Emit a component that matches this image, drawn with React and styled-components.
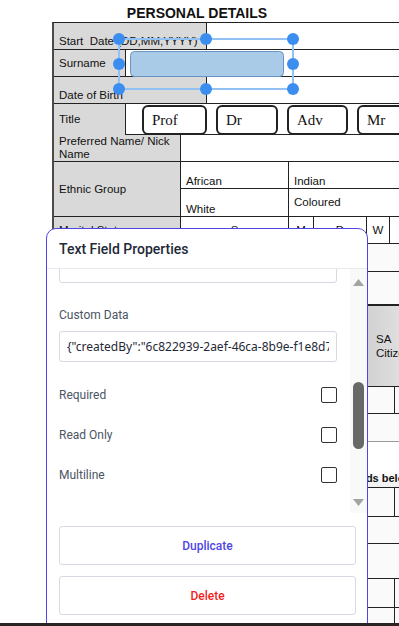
import React from "react";
import styled, { createGlobalStyle } from "styled-components";

const GlobalStyle = createGlobalStyle`
  html, body {
    margin: 0;
    padding: 0;
    background: #fff;
    overflow: hidden;
  }
  body {
    font-family: "Liberation Sans", Arial, sans-serif;
  }
`;

const Page = styled.div`
  position: relative;
  width: 399px;
  height: 626px;
  overflow: hidden;
`;

const Heading = styled.h1`
  margin: 0;
  padding-top: 5px;
  width: 394px;
  text-align: center;
  font: 700 14px/16px "Liberation Sans", Arial, sans-serif;
  color: #111;
`;

const Sheet = styled.div`
  margin: 1px 0 0 52px;
  width: 380px;
  border-top: 1px solid #222;
  border-left: 2px solid #4a4a4a;
  font-size: 11.5px;
  line-height: 13px;
  color: #111;
`;

const Row = styled.div`
  display: grid;
  grid-template-columns: ${(p) => p.$cols};
  grid-template-rows: ${(p) => p.$rows || "1fr"};
  height: ${(p) => p.$h}px;
  box-sizing: border-box;
  border-bottom: ${(p) =>
    p.$heavy ? "2px solid #222" : p.$light ? "1px solid #9a9a9a" : "1px solid #222"};
`;

const Label = styled.div`
  grid-row: ${(p) => p.$span || "auto"};
  background: #d9d9d9;
  padding: 0 5px;
  display: flex;
  align-items: ${(p) => (p.$bottom ? "flex-end" : "center")};
  padding-bottom: ${(p) => (p.$bottom ? "1px" : "0")};
`;

const Cell = styled.div`
  box-sizing: border-box;
  border-left: ${(p) => (p.$noLeft ? "none" : "1px solid #222")};
  border-bottom: ${(p) => (p.$under ? "1px solid #222" : "none")};
  display: flex;
  align-items: ${(p) => p.$v || "center"};
  justify-content: ${(p) => (p.$center ? "center" : "flex-start")};
  padding: 0 ${(p) => p.$pad || 5}px;
  line-height: ${(p) => (p.$wrap ? "14px" : "13px")};
  background: ${(p) =>
    p.$grey ? "linear-gradient(90deg, #d2d2d2, #e4e4e4)" : p.$soft ? "#fafafa" : "transparent"};
`;

const SectionNote = styled.div`
  display: flex;
  align-items: flex-end;
  padding: 0 0 2px ${(p) => p.$indent}px;
  font-weight: 700;
  font-size: 11px;
  background: linear-gradient(180deg, #fff 60%, #f1f1f1);
`;

const TitleOptions = styled.div`
  border-left: 1px solid #222;
  display: flex;
  gap: 9px;
  padding: 1px 0 0 16px;
`;

const TitleBox = styled.div`
  flex: none;
  width: ${(p) => p.$w}px;
  height: 30px;
  box-sizing: border-box;
  border: 2px solid #222;
  border-radius: 6px;
  display: flex;
  align-items: center;
  padding-left: 8px;
  font: 15px/17px "Liberation Serif", "Times New Roman", serif;
  color: #111;
`;

const Selection = styled.svg`
  position: absolute;
  left: 0;
  top: 0;
  pointer-events: none;
`;

const Panel = styled.aside`
  position: absolute;
  left: 46px;
  top: 228px;
  width: 322px;
  height: 420px;
  box-sizing: border-box;
  border: 1px solid #4f46e5;
  border-radius: 10px 10px 0 0;
  background: #fff;
  display: flex;
  flex-direction: column;
  font-family: Roboto, "Noto Sans", sans-serif;
`;

const PanelHeader = styled.header`
  height: 40px;
  box-sizing: border-box;
  flex: none;
  border-bottom: 1px solid #e8e8ef;
  padding: 1px 12px 0;
  display: flex;
  align-items: center;
  font-size: 14px;
  font-weight: 500;
  color: #1f2937;
`;

const PanelBody = styled.div`
  display: flex;
  height: 244px;
  flex: none;
`;

const Viewport = styled.div`
  flex: 1;
  overflow: hidden;
  padding: 0 13px 0 12px;
`;

const ScrollContent = styled.div`
  margin-top: -17px;
`;

const FieldLabel = styled.div`
  margin-top: 24px;
  font-size: 12px;
  line-height: 16px;
  color: #4b5563;
`;

const TextInput = styled.input`
  display: block;
  width: 100%;
  height: 31px;
  box-sizing: border-box;
  margin: ${(p) => p.$mt || 0}px 0 0;
  padding: 0 7px;
  border: 1px solid #d8d8e2;
  border-radius: 3px;
  font: 12px "Noto Sans", Roboto, sans-serif;
  color: #1f2937;
  background: #fff;
  outline: none;
`;

const ToggleList = styled.div`
  margin-top: 13px;
`;

const ToggleRow = styled.label`
  height: 40px;
  display: flex;
  align-items: center;
  justify-content: space-between;
  font-size: 12px;
  color: #4b5563;
`;

const Check = styled.input`
  appearance: none;
  margin: 0;
  width: 16px;
  height: 16px;
  box-sizing: border-box;
  border: 1.5px solid #333;
  border-radius: 2px;
  background: #fff;
`;

const Scrollbar = styled.div`
  width: 17px;
  flex: none;
  background: #f9f9f9;
  display: flex;
  flex-direction: column;
  align-items: center;
  padding: 6px 0 4px;
  box-sizing: border-box;
`;

const Arrow = styled.div`
  height: 14px;
  display: flex;
  align-items: center;
  justify-content: center;
`;

const Track = styled.div`
  flex: 1;
  width: 100%;
  display: flex;
  justify-content: center;
`;

const Thumb = styled.div`
  width: 11px;
  height: 67px;
  border-radius: 6px;
  background: #686868;
`;

const Footer = styled.div`
  display: flex;
  flex-direction: column;
  gap: 11px;
  padding: 13px 11px 0 12px;
`;

const ActionButton = styled.button`
  height: 39px;
  border: 1px solid #d9d9e3;
  border-radius: 3px;
  background: #fff;
  font: 500 12px Roboto, "Noto Sans", sans-serif;
  color: ${(p) => p.$tone};
`;

const BottomBar = styled.div`
  position: absolute;
  left: 0;
  right: 0;
  bottom: 0;
  height: 3px;
  background: #2b2422;
`;

const handles = [
  [119, 39], [206, 39], [293, 39],
  [119, 64], [293, 64],
  [119, 89], [206, 89], [293, 89],
];

export default function App() {
  return (
    <Page>
      <GlobalStyle />
      <Heading>PERSONAL DETAILS</Heading>
      <Sheet>
        <Row $h={27} $cols="152px 1fr">
          <Label $bottom>Start&nbsp; Date (DD,MM,YYYY)</Label>
          <Cell />
        </Row>
        <Row $h={27} $cols="71px 1fr">
          <Label>Surname</Label>
          <Cell />
        </Row>
        <Row $h={27} $cols="152px 1fr">
          <Label $bottom>Date of Birth</Label>
          <Cell />
        </Row>
        <Row $h={31} $cols="71px 1fr">
          <Label>Title</Label>
          <TitleOptions>
            <TitleBox $w={65}>Prof</TitleBox>
            <TitleBox $w={62}>Dr</TitleBox>
            <TitleBox $w={61}>Adv</TitleBox>
            <TitleBox $w={62}>Mr</TitleBox>
          </TitleOptions>
        </Row>
        <Row $h={27} $cols="126px 1fr">
          <Label>Preferred Name/ Nick Name</Label>
          <Cell />
        </Row>
        <Row $h={55} $cols="126px 108px 1fr" $rows="27px 1fr">
          <Label $span="span 2">Ethnic Group</Label>
          <Cell $under $v="flex-end">African</Cell>
          <Cell $under $v="flex-end">Indian</Cell>
          <Cell $v="flex-end">White</Cell>
          <Cell>Coloured</Cell>
        </Row>
        <Row $h={27} $cols="126px 108px 25px 53px 23px 1fr">
          <Label>Marital Status</Label>
          <Cell $center>S</Cell>
          <Cell $center>M</Cell>
          <Cell $center>D</Cell>
          <Cell $center>W</Cell>
          <Cell />
        </Row>
        <Row $h={28} $cols="126px 1fr">
          <Label>Race</Label>
          <Cell $soft />
        </Row>
        <Row $h={34} $heavy $cols="126px 1fr">
          <Label>Nationality</Label>
          <Cell $soft />
        </Row>
        <Row $h={81} $cols="313px 48px 1fr">
          <Cell $noLeft />
          <Cell $grey $wrap $pad={8}>SA Citizen</Cell>
          <Cell $grey />
        </Row>
        <Row $h={27} $cols="340px 1fr">
          <Cell $noLeft $soft />
          <Cell $soft />
        </Row>
        <Row $h={28} $light $cols="1fr">
          <Cell $noLeft $soft />
        </Row>
        <Row $h={46} $cols="1fr">
          <SectionNote $indent={296}>fields below</SectionNote>
        </Row>
        <Row $h={29} $cols="340px 1fr">
          <Cell $noLeft $soft />
          <Cell $soft />
        </Row>
        <Row $h={27} $cols="1fr">
          <Cell $noLeft $soft />
        </Row>
        <Row $h={35} $cols="1fr">
          <Cell $noLeft $soft />
        </Row>
        <Row $h={29} $cols="340px 1fr">
          <Cell $noLeft $soft />
          <Cell $soft />
        </Row>
        <Row $h={32} $cols="340px 1fr">
          <Cell $noLeft $soft />
          <Cell $soft />
        </Row>
      </Sheet>

      <Selection width="399" height="100" viewBox="0 0 399 100">
        <rect x="130.5" y="51.5" width="153" height="25" rx="4" fill="#a9cbe8" stroke="#6a95c2" />
        <rect x="119" y="39" width="174" height="50" fill="none" stroke="#93c1f3" strokeWidth="2" />
        {handles.map(([cx, cy]) => (
          <circle key={`${cx}-${cy}`} cx={cx} cy={cy} r="6" fill="#3b8ef0" />
        ))}
      </Selection>

      <Panel>
        <PanelHeader>Text Field Properties</PanelHeader>
        <PanelBody>
          <Viewport>
            <ScrollContent>
              <TextInput readOnly value="" />
              <FieldLabel>Custom Data</FieldLabel>
              <TextInput
                $mt={8}
                readOnly
                value={'{"createdBy":"6c822939-2aef-46ca-8b9e-f1e8d7a2c4b1"}'}
              />
              <ToggleList>
                <ToggleRow>
                  Required
                  <Check type="checkbox" />
                </ToggleRow>
                <ToggleRow>
                  Read Only
                  <Check type="checkbox" />
                </ToggleRow>
                <ToggleRow>
                  Multiline
                  <Check type="checkbox" />
                </ToggleRow>
              </ToggleList>
            </ScrollContent>
          </Viewport>
          <Scrollbar>
            <Arrow>
              <svg width="11" height="7" viewBox="0 0 11 7">
                <path d="M5.5 0 L11 7 L0 7 Z" fill="#a3a3a3" />
              </svg>
            </Arrow>
            <Track>
              <Thumb style={{ marginTop: 93 }} />
            </Track>
            <Arrow>
              <svg width="11" height="7" viewBox="0 0 11 7">
                <path d="M0 0 L11 0 L5.5 7 Z" fill="#a3a3a3" />
              </svg>
            </Arrow>
          </Scrollbar>
        </PanelBody>
        <Footer>
          <ActionButton $tone="#4f46e5">Duplicate</ActionButton>
          <ActionButton $tone="#ef1f1f">Delete</ActionButton>
        </Footer>
      </Panel>
      <BottomBar />
    </Page>
  );
}
